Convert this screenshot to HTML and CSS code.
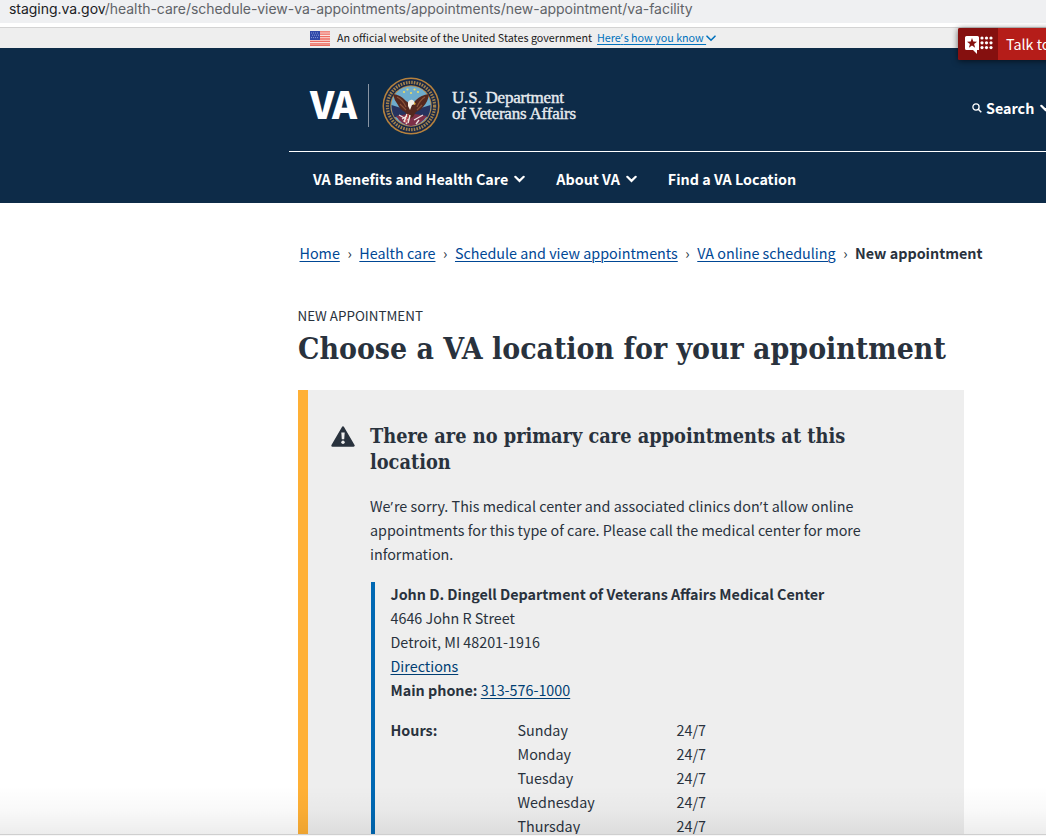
FILE: index.html
```html
<!DOCTYPE html>
<html lang="en">
<head>
<meta charset="utf-8">
<title>Choose a VA location | Veterans Affairs</title>
<link rel="stylesheet" href="styles.css">
</head>
<body>
<div class="window">
  <div class="address"><span class="url"><b class="host">staging.va.gov</b>/health-care/schedule-view-va-appointments/appointments/new-appointment/va-facility</span></div>
  <div class="gov">
    <svg class="flag" viewBox="0 0 20 15"><rect width="20" height="15" fill="#fbe3df"/><path d="M0 .8h20M0 3.2h20M0 5.6h20M0 8h20M0 10.4h20M0 12.8h20" stroke="#ee6b60" stroke-width="1.3"/><path d="M0 14.3h20" stroke="#e8513f" stroke-width="1"/><rect width="10" height="9" fill="#2f48a8"/><path d="M1 2h8M2 4.2h7M1 6.6h8" stroke="#8fa3dc" stroke-width=".9" stroke-dasharray="1 1"/></svg>
    <span class="gov-text">An official website of the United States government</span>
    <a class="gov-link" href="#">Here<span class="apos">’</span>s how you know </a>
    <svg class="gov-chev" viewBox="0 0 10 7"><path d="M1 1.2l4 4 4-4" fill="none" stroke="#0071bc" stroke-width="1.6" stroke-linecap="round"/></svg>
  </div>
  <header class="header">
    <div class="brand-row">
      <span class="va">VA</span>
      <span class="divider"></span>
      <svg class="seal" viewBox="0 0 58 58">
        <circle cx="29" cy="29" r="28.5" fill="#b6823d"/><circle cx="29" cy="29" r="27" fill="#172848"/>
        <circle cx="29" cy="29" r="23.6" fill="none" stroke="#a1804c" stroke-width="3.2" stroke-dasharray="1.6 1.1"/>
        <circle cx="29" cy="29" r="20.7" fill="#b98743"/><circle cx="29" cy="29" r="19.8" fill="#6eaccc"/>
        <path d="M9.500 28l16 5v9l-13-2q-3-5-3-12zM48.500 28l-16 5v9l13-2q3-5 3-12z" fill="#26335f"/>
        <path d="M14 39l12-2 7 0 12 2q-6 9-16 10-10-1-15-10z" fill="#7d2f48"/>
        <path d="M17 38l9 5M41 38l-9 5M22 43l3 4M37 43l-3 4M20 42l5-3" stroke="#eadfe1" stroke-width="1.4"/>
        <path d="M11 17q8 1 13 7l4 3 3-1 3-3q5-5 13-6-1 8-6 13-3 4-7 5l-3 5-4 2-4-7q-5-2-7-7-4-5-5-11z" fill="#54281f"/>
        <path d="M15 20q6 3 9 10M43 20q-5 3-8 10M18 27l6 6M40 28l-5 5" fill="none" stroke="#8b5237" stroke-width="1.2"/>
        <path d="M26 25q3-4 6-1l1 3-3 1-2 5-2-4z" fill="#f3eee5"/><path d="M32 25l2 2-2 1z" fill="#e7b63d"/>
        <path d="M25 37l-3 8M28 38l-2 8" stroke="#f0e7df" stroke-width="1.5"/><path d="M26.500 37l-3 9" stroke="#c64a4c" stroke-width="1.2"/>
        <g fill="#eadb68"><circle cx="22" cy="15" r="1.1"/><circle cx="25.500" cy="12.500" r="1.1"/><circle cx="29" cy="16" r="1.1"/><circle cx="32.500" cy="12.500" r="1.1"/><circle cx="36" cy="15" r="1.1"/></g>
      </svg>
      <span class="dept"><span class="dept-a">U.S. Department</span><span class="dept-b">of Veterans Affairs</span></span>
      <span class="search"><svg class="lens" viewBox="0 0 10 10"><circle cx="4" cy="4" r="3.100" fill="none" stroke="#fff" stroke-width="1.300"/><path d="M6.300 6.300l3 3" stroke="#fff" stroke-width="1.500"/></svg><span class="search-text">Search</span><svg class="chev" viewBox="0 0 10 7"><path d="M1.200 1.500L5 5.200l3.800-3.700" fill="none" stroke="#fff" stroke-width="2" stroke-linecap="round"/></svg></span>
    </div>
    <nav class="nav">
      <span class="nav-a">VA Benefits and Health Care</span><svg class="chev" viewBox="0 0 10 7"><path d="M1.200 1.500L5 5.200l3.800-3.700" fill="none" stroke="#fff" stroke-width="2" stroke-linecap="round"/></svg>
      <span class="nav-b">About VA</span><svg class="chev" viewBox="0 0 10 7"><path d="M1.200 1.500L5 5.200l3.800-3.700" fill="none" stroke="#fff" stroke-width="2" stroke-linecap="round"/></svg>
      <span class="nav-c">Find a VA Location</span>
    </nav>
  </header>
  <main class="main">
    <div class="crumbs"><a href="#">Home</a><i>›</i><a href="#">Health care</a><i>›</i><a href="#">Schedule and view appointments</a><i>›</i><a href="#">VA online scheduling</a><i>›</i><b>New appointment</b></div>
    <div class="eyebrow">NEW APPOINTMENT</div>
    <h1 class="title">Choose a VA location for your appointment</h1>
    <section class="alert">
      <svg class="warn" viewBox="0 0 24 21"><path d="M12 1.500L22.500 19.500H1.500z" fill="#29323d" stroke="#29323d" stroke-width="2.400" stroke-linejoin="round"/><path d="M10.300 6.500h3.400l-.5 6.800h-2.400z" fill="#eee"/><circle cx="12" cy="16.300" r="1.700" fill="#eee"/></svg>
      <div class="alert-body">
        <h2 class="subtitle">There are no primary care appointments at this<br>location</h2>
        <p class="para">We<span class="apos">’</span>re sorry. This medical center and associated clinics don<span class="apos">’</span>t allow online<br>appointments for this type of care. Please call the medical center for more<br>information.</p>
        <div class="facility">
          <b>John D. Dingell Department of Veterans Affairs Medical Center</b>
          <span>4646 John R Street</span>
          <span>Detroit, MI 48201-1916</span>
          <span><a href="#">Directions</a></span>
          <span><b>Main phone:</b> <a href="#">313-576-1000</a></span>
          <div class="hours">
            <b>Hours:</b><span>Sunday</span><span>24/7</span>
            <span></span><span>Monday</span><span>24/7</span>
            <span></span><span>Tuesday</span><span>24/7</span>
            <span></span><span>Wednesday</span><span>24/7</span>
            <span></span><span>Thursday</span><span>24/7</span>
          </div>
        </div>
      </div>
    </section>
  </main>
  <div class="talk"><span class="talk-icon"><svg viewBox="0 0 28 18"><path d="M1.500 0h11q1.500 0 1.500 1.500V14h-2v4l-4-4H1.500Q0 14 0 12.500v-11Q0 0 1.500 0z" fill="#fff"/><path d="M7 2l1.300 3.600 3.700.1-2.900 2.300 1 3.700L7 9.500l-3.100 2.200 1-3.700L2 5.700l3.700-.1z" fill="#85100f"/><g fill="#fff"><circle cx="17" cy="2" r="1.600"/><circle cx="21.500" cy="2" r="1.600"/><circle cx="26" cy="2" r="1.600"/><circle cx="17" cy="6.800" r="1.600"/><circle cx="21.500" cy="6.800" r="1.600"/><circle cx="26" cy="6.800" r="1.600"/><circle cx="17" cy="11.600" r="1.600"/><circle cx="21.500" cy="11.600" r="1.600"/><circle cx="26" cy="11.600" r="1.600"/></g></svg></span><span class="talk-text">Talk to</span></div>
  <div class="fade"></div>
</div>
</body>
</html>
```
FILE: styles.css
```css
* { box-sizing: border-box; }
body { margin: 0; background: #fff; }
.window { position: relative; width: 1046px; height: 836px; overflow: hidden; background: #fff; color: #29323d; font: 14.34px/24px "Noto Sans CJK SC", sans-serif; white-space: nowrap; display: flex; flex-direction: column; }
.window > * { flex: none; }
svg { display: block; flex: none; }
a { color: #003e73; text-decoration: underline; text-decoration-thickness: 1px; text-underline-offset: 2px; }
.apos { font-family: "Open Sans", sans-serif; line-height: 1; letter-spacing: 1px; }

.address { height: 23px; background: #eff0f2; padding-left: 9px; font: 14px/18px Inter, sans-serif; letter-spacing: -.035px; color: #5f6368; overflow: hidden; }
.host { font-weight: 400; color: #202124; }
.gov { margin-top: 4px; height: 21px; border-top: 1px solid #d3d3d3; background: #eee; padding-left: 310px; display: flex; align-items: center; font-size: 10.75px; line-height: 20px; color: #1b1b1b; }
.flag { width: 20px; height: 15px; margin-right: 7px; }
.gov-link { margin-left: 5px; color: #0071bc; white-space: pre; }
.gov-chev { width: 10px; height: 7px; }

.header { height: 155px; background: #0d2b48; color: #fff; padding-left: 289px; font-weight: 700; }
.brand-row { height: 104px; padding-left: 21px; border-bottom: 1px solid #fff; display: flex; align-items: center; padding-top: 12px; }
.brand-row > * { flex: none; }
.va { font-weight: 900; font-size: 38px; line-height: 44px; letter-spacing: -1.6px; width: 58px; padding-bottom: 5px; }
.divider { width: 1px; height: 43px; background: #8895a4; margin-right: 13px; }
.seal { width: 58px; height: 58px; }
.dept { display: flex; flex-direction: column; margin-left: 12px; width: 520px; font: 400 17px/16px "Liberation Serif", serif; letter-spacing: -.2px; color: #e7ebef; -webkit-text-stroke: .4px #e7ebef; }
.search { display: flex; align-items: center; padding-top: 4px; }
.lens { width: 10px; height: 10px; margin-right: 4px; }
.chev { width: 11px; height: 8px; margin-left: 6px; }
.nav { height: 51px; padding: 2px 0 0 24px; display: flex; align-items: center; }
.nav-b, .nav-c { margin-left: 31px; }

.main { padding-left: 298px; }
.crumbs { margin: 38px 0 0 1.500px; display: flex; }
.crumbs a { color: #004795; }
.crumbs i { font-style: normal; width: 19.500px; text-align: center; }
.eyebrow { margin-top: 38px; font-size: 13.400px; margin-left: -.5px; }
.title { margin: 0; font: 700 29.900px/43px "DejaVu Serif Condensed", "DejaVu Serif", serif; font-stretch: condensed; }
.alert { margin-top: 20px; width: 666px; height: 460px; border-left: 10px solid #ffb035; background: #eee; display: flex; padding: 32px 0 0 23px; }
.warn { width: 24px; height: 21px; margin: 4px 15px 0 0; }
.subtitle { margin: 0; padding-top: 1px; font: 700 19.770px/26px "DejaVu Serif Condensed", "DejaVu Serif", serif; font-stretch: condensed; }
.para { margin: 19px 0 16px; }
.facility { border-left: 4px solid #0068b3; margin-left: 1px; padding-left: 15.500px; height: 270px; display: flex; flex-direction: column; }
.hours { margin-top: 16px; display: grid; grid-template-columns: 127px 159px 60px; }

.talk { position: absolute; left: 958px; top: 28px; width: 100px; height: 32px; display: flex; background: #b51d19; border-radius: 2px; box-shadow: 0 1px 6px rgba(0,0,0,.6); color: #fff; line-height: 31px; }
.talk-icon { width: 40px; background: #85100f; padding: 8px 0 0 7px; border-radius: 2px 0 0 2px; }
.talk-icon svg { width: 28px; height: 18px; }
.talk-text { margin-left: 8px; }
.fade { position: absolute; left: 0; top: 786px; width: 1046px; height: 50px; background: linear-gradient(rgba(0,0,0,0), rgba(0,0,0,.025) 50%, rgba(0,0,0,.075)); border-bottom: 1px solid #f7f7f7; box-shadow: inset 0 -1px 0 #cfcfcf; }
```
